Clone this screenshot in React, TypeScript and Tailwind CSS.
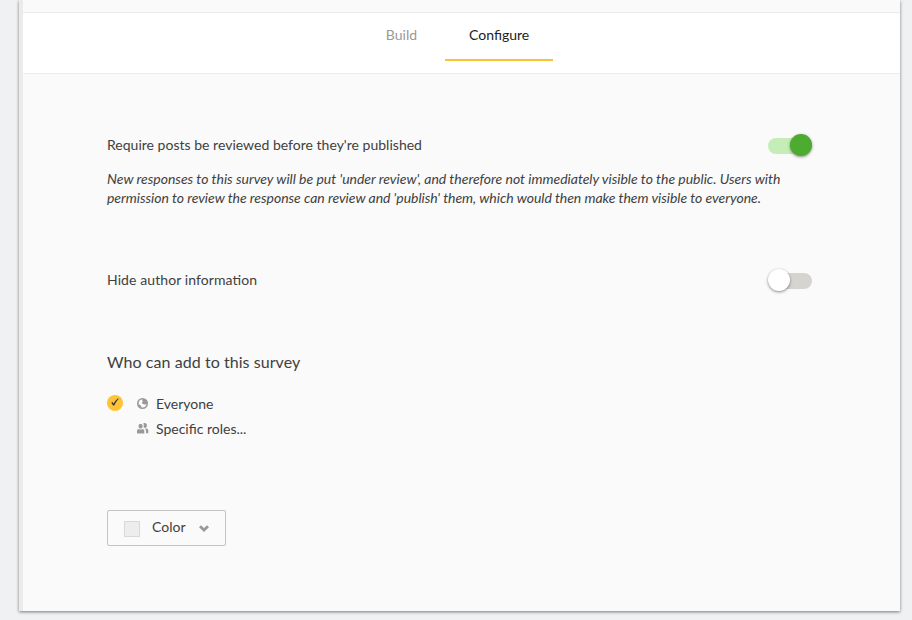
import React from 'react';

function Toggle({ on = false }: { on?: boolean }) {
  return (
    <span className={`mt-px flex h-4 w-[44px] items-center rounded-full ${on ? 'justify-end bg-[#c5edb8]' : 'justify-start bg-[#d5d4d0]'}`}>
      <span className={`-mt-0.5 size-[22px] shrink-0 rounded-full shadow-[0_1px_3px_rgba(0,0,0,0.45)] ${on ? 'bg-[#4dab2f]' : 'bg-white'}`} />
    </span>
  );
}

function GlobeIcon() {
  return (
    <svg className="mr-2 size-[11px]" viewBox="0 0 11 11">
      <circle cx="5.5" cy="5.5" r="4.7" fill="none" stroke="#999" strokeWidth="1.6" />
      <path d="M5.6.8 5.2 2.6l.6.8-.8 1 .3 1.4 1.600.4 1.400.4L10.200 6V3L8 1z" fill="#999" />
      <path d="M1 5.600 2.600 6.700 4 7.800l.5 2.200L2 8.800z" fill="#999" />
    </svg>
  );
}

function PeopleIcon() {
  return (
    <svg className="mr-2 h-[11px] w-[11px] overflow-visible" viewBox="0 0 11 11" fill="#999">
      <path d="M1.5 3C1.5 1.5 2.4.9 3.6.9S5.7 1.5 5.7 3c0 1.4-.9 2.6-2.1 2.6S1.5 4.4 1.5 3zM0 8.2C0 7 .6 6.1 1.8 5.9l1.8.9 1.8-.9c1.2.2 1.9 1.1 1.9 2.3v2.3H0z" />
      <path d="M6.2.4C8.2-.7 9.9.3 9.9 2.3c0 1.3-.5 2.3-1.4 2.7L6.5 4.4C7 3 7 1.6 6.2.4zM7.8 5.7l1.5-.3c1.3.3 2 1 2 2.2v2.6H9V8.2c0-1.1-.4-1.9-1.2-2.5z" />
    </svg>
  );
}

export default function App() {
  return (
    <div className="h-[620px] w-[912px] overflow-hidden bg-[#f0f1f3] pl-[19px] font-['Lato',sans-serif] text-sm text-[#404040]">
      <main className="h-[611px] w-[881px] border-l-4 border-[#ebebec] bg-[#fafafa] shadow-[0_1px_3px_rgba(0,0,0,0.5)]">
        <div className="h-3" />
        <nav className="flex h-[62px] justify-center gap-1 border-y border-[#ebebeb] bg-white pr-2">
          <span className="h-12 px-6 pt-3 text-[#999]">Build</span>
          <span className="h-12 border-b-2 border-[#fac132] px-6 pt-3 text-[#222]">Configure</span>
        </nav>
        <div className="px-[84px] pt-[61px]">
          <div className="flex h-5 items-center justify-between pr-1">
            <span className="tracking-[0.015px]">Require posts be reviewed before they're published</span>
            <Toggle on />
          </div>
          <p className="mt-[14px] italic leading-[19px]">
            <span className="tracking-[-0.015px]">New responses to this survey will be put 'under review', and therefore not immediately visible to the public. Users with </span>
            <span className="tracking-[-0.04px]">permission to review the response can review and 'publish' them, which would then make them visible to everyone.</span>
          </p>
          <div className="mt-[63px] flex h-5 items-center justify-between pr-1">
            <span className="tracking-[0.09px] [font-feature-settings:'liga'_1]">Hide author information</span>
            <Toggle />
          </div>
          <h2 className="mt-[60px] text-base leading-6 tracking-[0.06px]">Who can add to this survey</h2>
          <ul className="mt-[17px]">
            <li className="flex h-[25px] items-center">
              <span className="mr-[14px] flex size-4 -translate-y-px items-center justify-center rounded-full bg-[#ffc334]">
                <svg className="-mt-px size-2" viewBox="0 0 8 8" fill="#333">
                  <path d="M.3 4.7 1.5 4.1 2.5 5.8Q4.3 2.4 7.2.3L7.7.7Q5 3.5 3.2 7.5L2.1 7.6Z" />
                </svg>
              </span>
              <GlobeIcon />
              <span>Everyone</span>
            </li>
            <li className="flex h-[25px] items-center pl-[30px]">
              <PeopleIcon />
              <span>Specific roles...</span>
            </li>
          </ul>
          <button className="mt-[69px] flex h-9 w-[119px] items-center rounded-xs border border-[#c4c4c4] pl-4">
            <span className="mt-0.5 mr-3 size-4 border border-[#d9d9d9] bg-[#ededed]" />
            <span className="-mt-0.5">Color</span>
            <svg className="ml-[13px] h-[7px] w-[10px]" viewBox="0 0 10 7" fill="none" stroke="#999" strokeWidth="2.8">
              <path d="m1 1.2 4 3.8 4-3.8" />
            </svg>
          </button>
        </div>
      </main>
    </div>
  );
}
